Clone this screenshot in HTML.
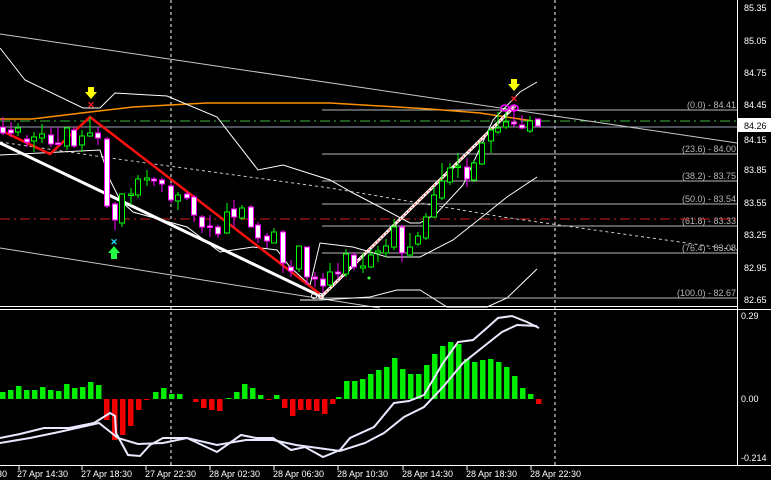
<!DOCTYPE html>
<html><head><meta charset="utf-8"><style>
html,body{margin:0;padding:0;background:#000;}
svg{display:block}
text{font-family:"Liberation Sans",sans-serif;font-size:9px;}
</style></head><body>
<svg width="771" height="480" viewBox="0 0 771 480" xmlns="http://www.w3.org/2000/svg">
<rect width="771" height="480" fill="#000"/>
<line x1="171" y1="0" x2="171" y2="465" stroke="#fff" stroke-dasharray="3,3"/>
<line x1="555" y1="0" x2="555" y2="465" stroke="#fff" stroke-dasharray="3,3"/>
<g stroke="#b8b8b8" stroke-width="1">
<line x1="322" y1="110" x2="737" y2="110"/>
<line x1="322" y1="154" x2="737" y2="154"/>
<line x1="322" y1="181" x2="737" y2="181"/>
<line x1="322" y1="204" x2="737" y2="204"/>
<line x1="322" y1="226" x2="737" y2="226"/>
<line x1="322" y1="253" x2="737" y2="253"/>
<line x1="322" y1="298" x2="737" y2="298"/>
</g>
<g fill="#b8b8b8" text-anchor="end">
<text x="736" y="108">(0.0) - 84.41</text>
<text x="736" y="152">(23.6) - 84.00</text>
<text x="736" y="179">(38.2) - 83.75</text>
<text x="736" y="202">(50.0) - 83.54</text>
<text x="736" y="224">(61.8) - 83.33</text>
<text x="736" y="251">(76.4) - 83.08</text>
<text x="736" y="296">(100.0) - 82.67</text>
</g>
<line x1="0" y1="121" x2="737" y2="121" stroke="#3cb83c" stroke-dasharray="10,4,2,4"/>
<line x1="0" y1="219" x2="737" y2="219" stroke="#d02020" stroke-dasharray="10,4,2,4"/>
<line x1="0" y1="127" x2="737" y2="127" stroke="#9aa4b4"/>
<line x1="0" y1="34" x2="737" y2="143" stroke="#c8c8c8"/>
<line x1="0" y1="248" x2="380" y2="308" stroke="#c8c8c8"/>
<polyline points="0,142 110,158 330,188 503,217 573,227 737,250" fill="none" stroke="#c8c8c8" stroke-dasharray="3,3"/>
<polyline points="0,119 32,119 90,112 133,107 207,103 330,103 430,109 480,113 533,121" fill="none" stroke="#ff9000" stroke-width="1.5"/>
<g fill="none" stroke="#fff" stroke-width="1">
<polyline points="0,48 25,80 83,108 100,108 115,93 167,96 217,117 258,170 283,165 330,180 353,193 380,207 410,223 420,223 437,213 463,185 493,120 520,92 537,82"/>
<polyline points="0,155 100,150 110,180 120,200 133,212 187,227 220,252 253,247 277,250 290,267 310,285 320,243 353,247 387,257 420,257 453,240 487,213 507,197 537,177"/>
<polyline points="300,300 320,300 370,297 397,290 420,290 447,307 487,307 507,298 537,269"/>
</g>
<line x1="0" y1="143" x2="320" y2="296" stroke="#fff" stroke-width="3"/>
<polyline points="0,130 50,154 90,117 320,294" fill="none" stroke="#ff1010" stroke-width="2.5"/>
<line x1="320" y1="298" x2="515" y2="106" stroke="#fff" stroke-width="3"/>
<line x1="320" y1="298" x2="515" y2="106" stroke="#ff3030" stroke-width="1" stroke-dasharray="2,2"/>
<g stroke-width="1">
<g stroke="#ff00ff" fill="#fff">
<line x1="3" y1="117" x2="3" y2="135"/><rect x="0.5" y="127" width="5" height="6"/>
<line x1="11" y1="122" x2="11" y2="137"/><rect x="8.5" y="130" width="5" height="3"/>
<line x1="27" y1="135" x2="27" y2="147"/><rect x="24.5" y="139" width="5" height="3"/>
<line x1="51" y1="127" x2="51" y2="147"/><rect x="48.5" y="135" width="5" height="9"/>
<line x1="58" y1="127" x2="58" y2="145"/><rect x="55.5" y="143" width="5" height="1.5"/>
<line x1="74" y1="127" x2="74" y2="148"/><rect x="71.5" y="130" width="5" height="16"/>
<line x1="98" y1="127" x2="98" y2="145"/><rect x="95.5" y="133" width="5" height="5"/>
<line x1="107" y1="137" x2="107" y2="208"/><rect x="104.5" y="139" width="5" height="67"/>
<line x1="115" y1="202" x2="115" y2="230"/><rect x="112.5" y="204" width="5" height="16"/>
<line x1="154" y1="177" x2="154" y2="186"/><rect x="151.5" y="179" width="5" height="2"/>
<line x1="162" y1="178" x2="162" y2="192"/><rect x="159.5" y="180" width="5" height="4"/>
<line x1="171" y1="183" x2="171" y2="203"/><rect x="168.5" y="186" width="5" height="14"/>
<line x1="187" y1="192" x2="187" y2="200"/><rect x="184.5" y="194" width="5" height="4"/>
<line x1="194" y1="195" x2="194" y2="222"/><rect x="191.5" y="197" width="5" height="18"/>
<line x1="202" y1="215" x2="202" y2="233"/><rect x="199.5" y="217" width="5" height="10"/>
<line x1="210" y1="215" x2="210" y2="237"/><rect x="207.5" y="226" width="5" height="1.5"/>
<line x1="218" y1="225" x2="218" y2="238"/><rect x="215.5" y="227" width="5" height="7"/>
<line x1="234" y1="200" x2="234" y2="227"/><rect x="231.5" y="209" width="5" height="8"/>
<line x1="251" y1="205" x2="251" y2="227"/><rect x="248.5" y="207" width="5" height="20"/>
<line x1="258" y1="222" x2="258" y2="243"/><rect x="255.5" y="225" width="5" height="13"/>
<line x1="267" y1="233" x2="267" y2="248"/><rect x="264.5" y="236" width="5" height="5"/>
<line x1="283" y1="230" x2="283" y2="273"/><rect x="280.5" y="232" width="5" height="31"/>
<line x1="291" y1="260" x2="291" y2="277"/><rect x="288.5" y="267" width="5" height="4"/>
<line x1="307" y1="247" x2="307" y2="285"/><rect x="304.5" y="247" width="5" height="30"/>
<line x1="315" y1="272" x2="315" y2="287"/><rect x="312.5" y="277" width="5" height="2"/>
<line x1="323" y1="273" x2="323" y2="293"/><rect x="320.5" y="279" width="5" height="7"/>
<line x1="338" y1="263" x2="338" y2="279"/><rect x="335.5" y="272" width="5" height="2"/>
<line x1="354" y1="252" x2="354" y2="270"/><rect x="351.5" y="255" width="5" height="12"/>
<line x1="402" y1="225" x2="402" y2="262"/><rect x="399.5" y="227" width="5" height="26"/>
<line x1="467" y1="158" x2="467" y2="187"/><rect x="464.5" y="167" width="5" height="12"/>
<line x1="514" y1="107" x2="514" y2="127"/><rect x="511.5" y="122" width="5" height="2"/>
<line x1="522" y1="115" x2="522" y2="129"/><rect x="519.5" y="125" width="5" height="3"/>
<line x1="538" y1="118" x2="538" y2="127"/><rect x="535.5" y="119" width="5" height="7"/>
</g>
<g stroke="#00ff00" fill="#000">
<line x1="18" y1="123" x2="18" y2="136"/><rect x="15.5" y="128" width="5" height="4"/>
<line x1="34" y1="132" x2="34" y2="152"/><rect x="31.5" y="137" width="5" height="4"/>
<line x1="42" y1="124" x2="42" y2="143"/><rect x="39.5" y="134" width="5" height="4"/>
<line x1="67" y1="127" x2="67" y2="150"/><rect x="64.5" y="128" width="5" height="18"/>
<line x1="82" y1="130" x2="82" y2="152"/><rect x="79.5" y="136" width="5" height="9"/>
<line x1="90" y1="117" x2="90" y2="137"/><rect x="87.5" y="133" width="5" height="3"/>
<line x1="122" y1="193" x2="122" y2="227"/><rect x="119.5" y="194" width="5" height="29"/>
<line x1="131" y1="188" x2="131" y2="205"/><rect x="128.5" y="194" width="5" height="1.5"/>
<line x1="138" y1="175" x2="138" y2="198"/><rect x="135.5" y="179" width="5" height="16"/>
<line x1="147" y1="170" x2="147" y2="186"/><rect x="144.5" y="178" width="5" height="2"/>
<line x1="178" y1="192" x2="178" y2="210"/><rect x="175.5" y="195" width="5" height="6"/>
<line x1="227" y1="203" x2="227" y2="234"/><rect x="224.5" y="212" width="5" height="21"/>
<line x1="242" y1="205" x2="242" y2="220"/><rect x="239.5" y="208" width="5" height="10"/>
<line x1="274" y1="228" x2="274" y2="243"/><rect x="271.5" y="232" width="5" height="11"/>
<line x1="299" y1="246" x2="299" y2="272"/><rect x="296.5" y="246" width="5" height="23"/>
<line x1="330" y1="263" x2="330" y2="287"/><rect x="327.5" y="272" width="5" height="13"/>
<line x1="346" y1="249" x2="346" y2="277"/><rect x="343.5" y="254" width="5" height="20"/>
<line x1="363" y1="253" x2="363" y2="273"/><rect x="360.5" y="266" width="5" height="2"/>
<line x1="371" y1="250" x2="371" y2="268"/><rect x="368.5" y="255" width="5" height="12"/>
<line x1="378" y1="246" x2="378" y2="262"/><rect x="375.5" y="251" width="5" height="2"/>
<line x1="386" y1="239" x2="386" y2="257"/><rect x="383.5" y="246" width="5" height="7"/>
<line x1="394" y1="219" x2="394" y2="250"/><rect x="391.5" y="227" width="5" height="20"/>
<line x1="410" y1="233" x2="410" y2="257"/><rect x="407.5" y="247" width="5" height="8"/>
<line x1="418" y1="232" x2="418" y2="246"/><rect x="415.5" y="236" width="5" height="8"/>
<line x1="426" y1="213" x2="426" y2="240"/><rect x="423.5" y="217" width="5" height="21"/>
<line x1="434" y1="187" x2="434" y2="218"/><rect x="431.5" y="195" width="5" height="22"/>
<line x1="442" y1="163" x2="442" y2="200"/><rect x="439.5" y="181" width="5" height="17"/>
<line x1="450" y1="163" x2="450" y2="185"/><rect x="447.5" y="168" width="5" height="14"/>
<line x1="458" y1="153" x2="458" y2="178"/><rect x="455.5" y="166" width="5" height="1.5"/>
<line x1="474" y1="160" x2="474" y2="182"/><rect x="471.5" y="163" width="5" height="17"/>
<line x1="482" y1="142" x2="482" y2="165"/><rect x="479.5" y="143" width="5" height="21"/>
<line x1="491" y1="128" x2="491" y2="153"/><rect x="488.5" y="130" width="5" height="11"/>
<line x1="498" y1="112" x2="498" y2="134"/><rect x="495.5" y="128" width="5" height="4"/>
<line x1="506" y1="110" x2="506" y2="129"/><rect x="503.5" y="122" width="5" height="5"/>
<line x1="530" y1="116" x2="530" y2="133"/><rect x="527.5" y="121" width="5" height="10"/>
</g>
</g>
<circle cx="369" cy="278" r="1.5" fill="#40ff40"/>
<ellipse cx="505" cy="108" rx="4" ry="3" fill="none" stroke="#ff00ff" stroke-width="1.5"/>
<ellipse cx="514" cy="108" rx="4" ry="3" fill="none" stroke="#ff00ff" stroke-width="1.5"/>
<circle cx="314" cy="296" r="2.5" fill="none" stroke="#fff"/><circle cx="321" cy="296" r="2.5" fill="none" stroke="#fff"/>
<path d="M88,87 h6 v5 h3 l-6,7 l-6,-7 h3z" fill="#ffff00"/>
<text x="91" y="108" fill="#ff2020" text-anchor="middle" font-size="10" font-weight="bold">✕</text>
<path d="M511,79 h6 v5 h3 l-6,7 l-6,-7 h3z" fill="#ffff00"/>
<text x="514" y="102" fill="#ff2020" text-anchor="middle" font-size="10" font-weight="bold">✕</text>
<text x="114" y="245" fill="#20e0ff" text-anchor="middle" font-size="10" font-weight="bold">✕</text>
<path d="M114,246 l6,7 h-3 v6 h-6 v-6 h-3z" fill="#20ff40"/>
<line x1="0" y1="306.5" x2="737" y2="306.5" stroke="#fff"/>
<line x1="0" y1="309.5" x2="771" y2="309.5" stroke="#fff"/>
<line x1="737.5" y1="0" x2="737.5" y2="466" stroke="#fff"/>
<line x1="0" y1="465.5" x2="771" y2="465.5" stroke="#fff"/>
<g fill="#fff">
<text x="744" y="11">85.35</text>
<text x="744" y="44">85.05</text>
<text x="744" y="76">84.75</text>
<text x="744" y="108">84.45</text>
<text x="744" y="143">84.15</text>
<text x="744" y="173">83.85</text>
<text x="744" y="206">83.55</text>
<text x="744" y="238">83.25</text>
<text x="744" y="271">82.95</text>
<text x="744" y="303">82.65</text>
</g>
<rect x="738" y="118" width="33" height="14" fill="#fff"/>
<text x="744" y="129" fill="#000">84.26</text>
<g fill="#00ee00">
<rect x="0" y="392" width="5.5" height="7"/><rect x="8" y="390" width="5.5" height="9"/><rect x="16" y="386" width="5.5" height="13"/><rect x="24" y="390" width="5.5" height="9"/><rect x="32" y="390" width="5.5" height="9"/><rect x="40" y="387" width="5.5" height="12"/><rect x="48" y="390" width="5.5" height="9"/><rect x="56" y="391" width="5.5" height="8"/><rect x="64" y="384" width="5.5" height="15"/><rect x="72" y="388" width="5.5" height="11"/><rect x="80" y="387" width="5.5" height="12"/><rect x="88" y="382" width="5.5" height="17"/><rect x="96" y="385" width="5.5" height="14"/>
<rect x="153" y="392" width="5.5" height="7"/><rect x="161" y="388" width="5.5" height="11"/><rect x="169" y="394" width="5.5" height="5"/><rect x="177" y="394" width="5.5" height="5"/>
<rect x="226" y="398" width="5.5" height="1"/><rect x="234" y="392" width="5.5" height="7"/><rect x="242" y="384" width="5.5" height="15"/><rect x="250" y="388" width="5.5" height="11"/><rect x="258" y="395" width="5.5" height="4"/><rect x="274" y="395" width="5.5" height="4"/>
<rect x="336" y="397" width="5.5" height="2"/><rect x="344" y="381" width="5.5" height="18"/><rect x="352" y="381" width="5.5" height="18"/><rect x="360" y="379" width="5.5" height="20"/><rect x="368" y="374" width="5.5" height="25"/><rect x="376" y="370" width="5.5" height="29"/><rect x="384" y="367" width="5.5" height="32"/><rect x="392" y="358" width="5.5" height="41"/><rect x="400" y="369" width="5.5" height="30"/><rect x="408" y="374" width="5.5" height="25"/><rect x="416" y="374" width="5.5" height="25"/><rect x="424" y="365" width="5.5" height="34"/><rect x="432" y="354" width="5.5" height="45"/><rect x="440" y="346" width="5.5" height="53"/><rect x="448" y="342" width="5.5" height="57"/><rect x="456" y="344" width="5.5" height="55"/><rect x="464" y="359" width="5.5" height="40"/><rect x="472" y="362" width="5.5" height="37"/><rect x="480" y="360" width="5.5" height="39"/><rect x="488" y="359" width="5.5" height="40"/><rect x="496" y="362" width="5.5" height="37"/><rect x="504" y="367" width="5.5" height="32"/><rect x="512" y="376" width="5.5" height="23"/><rect x="520" y="388" width="5.5" height="11"/><rect x="528" y="394" width="5.5" height="5"/>
</g>
<g fill="#ee0000">
<rect x="104" y="399" width="5.5" height="21"/><rect x="112" y="399" width="5.5" height="41"/><rect x="120" y="399" width="5.5" height="36"/><rect x="128" y="399" width="5.5" height="27"/><rect x="136" y="399" width="5.5" height="11"/><rect x="144" y="399" width="5.5" height="1"/>
<rect x="193" y="399" width="5.5" height="3"/><rect x="201" y="399" width="5.5" height="9"/><rect x="209" y="399" width="5.5" height="11"/><rect x="217" y="399" width="5.5" height="12"/><rect x="266" y="399" width="5.5" height="1"/>
<rect x="282" y="399" width="5.5" height="9"/><rect x="290" y="399" width="5.5" height="17"/><rect x="298" y="399" width="5.5" height="11"/><rect x="306" y="399" width="5.5" height="11"/><rect x="314" y="399" width="5.5" height="12"/><rect x="322" y="399" width="5.5" height="15"/><rect x="330" y="399" width="5.5" height="5"/>
<rect x="536" y="399" width="5.5" height="5"/>
</g>
<g fill="none" stroke="#e8e8ff" stroke-width="2">
<polyline points="0,438 20,434 44,428 69,428 94,423 110,413 115,416 116,433 128,455 140,456 150,445 163,438 187,438 202,445 217,452 241,435 256,438 273,438 291,450 305,447 323,457 340,450 350,438 374,427 394,403 409,401 424,395 443,363 458,342 473,340 488,327 498,318 512,316 527,322 539,328"/>
<polyline points="0,443 30,438 59,432 99,423 118,438 138,444 163,443 187,438 217,445 246,440 273,440 296,445 340,451 365,443 384,433 404,417 424,407 443,387 463,363 483,347 502,332 517,325 537,326"/>
</g>
<g fill="#fff">
<text x="741" y="319">0.29</text>
<text x="741" y="402">0.00</text>
<text x="741" y="461">-0.214</text>
</g>
<g stroke="#fff">
<line x1="19" y1="465" x2="19" y2="470"/><line x1="82" y1="465" x2="82" y2="470"/><line x1="146" y1="465" x2="146" y2="470"/><line x1="210" y1="465" x2="210" y2="470"/><line x1="274" y1="465" x2="274" y2="470"/><line x1="338" y1="465" x2="338" y2="470"/><line x1="403" y1="465" x2="403" y2="470"/><line x1="467" y1="465" x2="467" y2="470"/><line x1="531" y1="465" x2="531" y2="470"/>
</g>
<g fill="#fff">
<text x="-3" y="477">30</text>
<text x="17" y="477">27 Apr 14:30</text>
<text x="81" y="477">27 Apr 18:30</text>
<text x="145" y="477">27 Apr 22:30</text>
<text x="209" y="477">28 Apr 02:30</text>
<text x="273" y="477">28 Apr 06:30</text>
<text x="337" y="477">28 Apr 10:30</text>
<text x="402" y="477">28 Apr 14:30</text>
<text x="466" y="477">28 Apr 18:30</text>
<text x="530" y="477">28 Apr 22:30</text>
</g>
</svg>
</body></html>
